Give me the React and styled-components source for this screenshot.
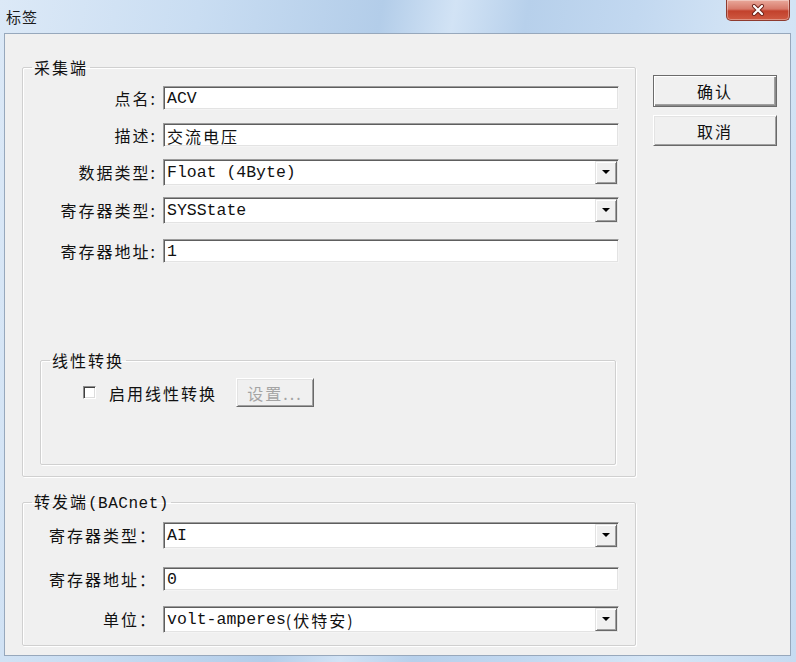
import React from 'react';
import styled, { createGlobalStyle } from 'styled-components';

const GlobalStyle = createGlobalStyle`
    html, body {
        margin: 0;
        padding: 0;
    }
    body {
        background: #c4d8ee;
        font-family: "Noto Sans CJK SC", "Liberation Sans", sans-serif;
    }
`;

const Window = styled.div`
    width: 796px;
    height: 662px;
    display: flex;
    flex-direction: column;
    box-sizing: border-box;
    background: linear-gradient(100deg, #dce9f7 0%, #c9ddf2 22%, #b3cde9 42%, #d2e3f5 50%, #b7d0eb 58%, #c2d8f0 70%, #d6e6f6 84%, #c6dbf1 100%);
`;

const TitleBar = styled.div`
    height: 33px;
    display: flex;
    align-items: flex-start;
    justify-content: space-between;
    padding: 0 6px 0 6px;
    box-sizing: border-box;
`;

const Title = styled.span`
    margin-top: 8px;
    font-size: 15px;
    line-height: 18px;
    color: #1b1b1b;
    letter-spacing: 1px;
`;

const CloseButton = styled.div`
    width: 64px;
    height: 21px;
    box-sizing: border-box;
    display: flex;
    align-items: center;
    justify-content: center;
    border: 1px solid #8e3b2f;
    border-top: none;
    border-radius: 0 0 5px 5px;
    background: linear-gradient(180deg, #e9a99b 0%, #d7796a 45%, #c2412c 55%, #cf5a42 100%);
    box-shadow: inset 0 0 0 1px rgba(255, 255, 255, 0.35);
`;

const Client = styled.div`
    flex: 1;
    display: flex;
    margin: 0 5px 6px 4px;
    padding: 23px 13px 0 17px;
    background: #f0f0f0;
    border: 1px solid #97a8bc;
`;

const LeftColumn = styled.div`
    width: 614px;
    display: flex;
    flex-direction: column;
`;

const ButtonColumn = styled.div`
    margin-left: 17px;
    margin-top: 18px;
    display: flex;
    flex-direction: column;
    gap: 8px;
`;

const Group = styled.fieldset`
    margin: ${p => p.$mt || 0}px ${p => p.$mr || 0}px 0 0;
    min-width: 0;
    padding: 0 ${p => p.$pr ?? 16}px ${p => p.$pb ?? 12}px ${p => p.$pl ?? 17}px;
    border: 1px solid #d0d0d0;
    border-radius: 2px;
    box-shadow: inset 1px 1px 0 #fff, 1px 1px 0 #fff;
`;

const Legend = styled.legend`
    margin-left: ${p => p.$ml ?? -8}px;
    padding: 0 2px;
    font-size: 16px;
    line-height: 20px;
    letter-spacing: 2px;
    color: #111;
`;

const Mono = styled.span`
    font-family: "Liberation Mono", "Noto Sans CJK SC", monospace;
    letter-spacing: 0.5px;
`;

const Row = styled.div`
    display: flex;
    align-items: center;
    height: 26px;
    margin-top: ${p => p.$mt ?? 11}px;
`;

const Label = styled.span`
    width: 117px;
    margin-right: 6px;
    text-align: right;
    white-space: nowrap;
    font-size: 16px;
    letter-spacing: 2px;
    color: #111;
`;

const Field = styled.div`
    flex: 1;
    position: relative;
    height: ${p => (p.$combo ? 27 : 24)}px;
    box-sizing: border-box;
    display: flex;
    align-items: center;
    padding: 1px 0 0 3px;
    background: #fff;
    border: 1px solid;
    border-color: #9c9c9c #f4f4f4 #f4f4f4 #9c9c9c;
    box-shadow: inset 1px 1px 0 #5e5e5e, inset -1px -1px 0 #e3e3e3;
    font-family: "Liberation Mono", "Noto Sans CJK SC", monospace;
    font-size: 16.5px;
    color: #111;
    white-space: nowrap;
`;

const Cjk = styled.span`
    font-family: "Noto Sans CJK SC", sans-serif;
    font-size: 16px;
    letter-spacing: 2px;
`;

const ArrowButton = styled.div`
    position: absolute;
    right: 1px;
    top: 1px;
    bottom: 1px;
    width: 22px;
    box-sizing: border-box;
    display: flex;
    align-items: center;
    justify-content: center;
    background: #f0f0f0;
    border: 1px solid;
    border-color: #e3e3e3 #696969 #696969 #e3e3e3;
    box-shadow: inset 1px 1px 0 #fff, inset -1px -1px 0 #a0a0a0;

    &::after {
        content: '';
        border-left: 4px solid transparent;
        border-right: 4px solid transparent;
        border-top: 4px solid #000;
    }
`;

const CheckRow = styled.div`
    display: flex;
    align-items: center;
    margin-top: 8px;
    padding-left: 16px;
`;

const CheckBox = styled.span`
    width: 13px;
    height: 13px;
    box-sizing: border-box;
    background: #fff;
    border: 1px solid;
    border-color: #8c8c8c #fff #fff #8c8c8c;
    box-shadow: inset 1px 1px 0 #3f3f3f, inset -1px -1px 0 #dcdcdc;
`;

const CheckLabel = styled.span`
    margin-left: 13px;
    font-size: 16px;
    letter-spacing: 2px;
    color: #111;
`;

const PushButton = styled.button`
    width: ${p => p.$w}px;
    height: ${p => p.$h}px;
    margin-left: ${p => p.$ml || 0}px;
    padding: 0;
    box-sizing: border-box;
    background: #f0f0f0;
    border: 1px solid;
    border-color: ${p => (p.$default ? '#6b6b6b' : '#fff #696969 #696969 #fff')};
    box-shadow: ${p =>
        p.$default
            ? 'inset 1px 1px 0 #fff, inset -1px -1px 0 #8a8a8a, inset -2px -2px 0 #a0a0a0'
            : 'inset 1px 1px 0 #e3e3e3, inset -1px -1px 0 #a0a0a0'};
    font-family: "Noto Sans CJK SC", sans-serif;
    font-size: 16px;
    letter-spacing: 2px;
    color: ${p => (p.disabled ? '#a4a4a4' : '#111')};
`;

const collectRows = [
    { label: '点名:', value: 'ACV', mt: 8 },
    { label: '描述:', value: <Cjk>交流电压</Cjk> },
    { label: '数据类型:', value: 'Float (4Byte)', combo: true },
    { label: '寄存器类型:', value: 'SYSState', combo: true, mt: 12 },
    { label: '寄存器地址:', value: '1', mt: 15 },
];

const forwardRows = [
    { label: '寄存器类型：', value: 'AI', combo: true, mt: 8 },
    { label: '寄存器地址：', value: '0', mt: 18 },
    { label: '单位：', value: <>volt-amperes<Cjk>(伏特安)</Cjk></>, combo: true, mt: 14 },
];

const FormRow = ({ label, value, combo, mt }) => (
    <Row $mt={mt}>
        <Label>{label}</Label>
        <Field $combo={combo}>
            {value}
            {combo && <ArrowButton />}
        </Field>
    </Row>
);

const App = () => (
    <>
        <GlobalStyle />
        <Window>
            <TitleBar>
                <Title>标签</Title>
                <CloseButton>
                    <svg width="14" height="12" viewBox="0 0 14 12">
                        <path d="M3 2 L11 10 M11 2 L3 10" stroke="#6b2018" strokeWidth="4" strokeLinecap="round" />
                        <path d="M3 2 L11 10 M11 2 L3 10" stroke="#fff" strokeWidth="2.2" strokeLinecap="round" />
                    </svg>
                </CloseButton>
            </TitleBar>
            <Client>
                <LeftColumn>
                    <Group $pb={11}>
                        <Legend>采集端</Legend>
                        {collectRows.map(r => (
                            <FormRow key={r.label} {...r} />
                        ))}
                        <Group $mt={86} $mr={3} $pl={26} $pr={10} $pb={57}>
                            <Legend $ml={-17}>线性转换</Legend>
                            <CheckRow>
                                <CheckBox />
                                <CheckLabel>启用线性转换</CheckLabel>
                                <PushButton $w={78} $h={29} $ml={19} disabled>
                                    设置...
                                </PushButton>
                            </CheckRow>
                        </Group>
                    </Group>
                    <Group $mt={14} $pb={13}>
                        <Legend>
                            转发端<Mono>(BACnet)</Mono>
                        </Legend>
                        {forwardRows.map(r => (
                            <FormRow key={r.label} {...r} />
                        ))}
                    </Group>
                </LeftColumn>
                <ButtonColumn>
                    <PushButton $w={124} $h={32} $default>
                        确认
                    </PushButton>
                    <PushButton $w={124} $h={31}>
                        取消
                    </PushButton>
                </ButtonColumn>
            </Client>
        </Window>
    </>
);

export default App;
